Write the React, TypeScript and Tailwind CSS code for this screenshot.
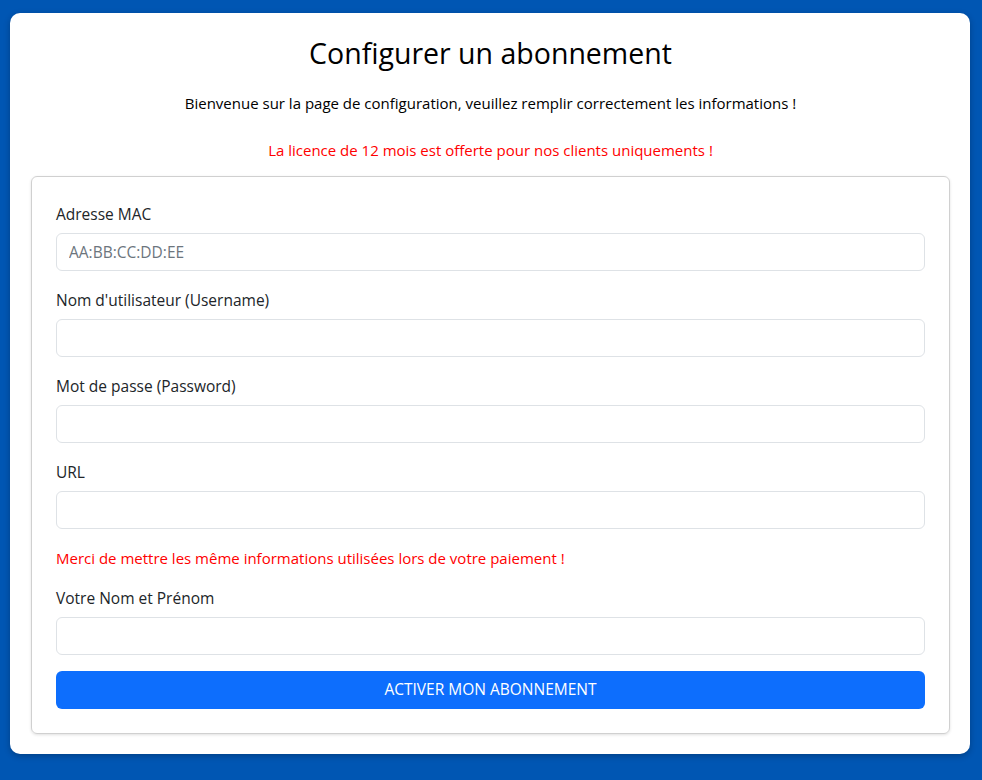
export default function App() {
  const fields = [
    { label: "Adresse MAC", placeholder: "AA:BB:CC:DD:EE" },
    { label: "Nom d'utilisateur (Username)", placeholder: "" },
    { label: "Mot de passe (Password)", placeholder: "", type: "password" },
    { label: "URL", placeholder: "" },
  ];

  return (
    <div
      className="min-h-[780px] bg-[#0056b3] pt-[13px] pb-[27px] pl-[10px] pr-[12px] text-[#212529]"
      style={{ fontFamily: '"Open Sans", "Noto Sans", Arial, sans-serif' }}
    >
      <div className="rounded-[10px] bg-white pt-5 pb-5 pl-[21px] pr-5 shadow-[0_2px_6px_rgba(0,0,0,0.25)]">
        <h1 className="text-center text-[28.5px] leading-[40px] font-normal text-black">
          Configurer un abonnement
        </h1>
        <p className="mt-[18px] text-center text-[15px] leading-6 text-black">
          Bienvenue sur la page de configuration, veuillez remplir correctement les informations !
        </p>
        <p className="mt-[23px] text-center text-[15px] leading-6 text-[#ff0000]">
          La licence de 12 mois est offerte pour nos clients uniquements !
        </p>

        <form
          className="mt-[14px] rounded-md border border-[#d0d0d0] px-6 pt-[24px] pb-6 shadow-[0_1px_3px_rgba(0,0,0,0.12)]"
          onSubmit={(e) => e.preventDefault()}
        >
          {fields.map((f) => (
            <div key={f.label} className="mb-4">
              <label className="mb-2 block pt-px text-[15.5px] leading-6">{f.label}</label>
              <input
                type={f.type ?? "text"}
                placeholder={f.placeholder}
                className="-mt-px block h-[38px] w-full rounded-md border border-[#dee2e6] px-3 text-[15.5px] placeholder:text-[#6c757d] focus:outline-none"
              />
            </div>
          ))}

          <p className="mb-4 pt-px text-[15px] leading-6 text-[#ff0000]">
            Merci de mettre les même informations utilisées lors de votre paiement !
          </p>

          <div className="-mt-px mb-4">
            <label className="mb-2 block pt-px text-[15.5px] leading-6">Votre Nom et Prénom</label>
            <input
              type="text"
              className="-mt-px block h-[38px] w-full rounded-md border border-[#dee2e6] px-3 text-[15.5px] focus:outline-none"
            />
          </div>

          <button
            type="submit"
            className="block h-[38px] w-full rounded-md bg-[#0d6efd] text-[15.5px] text-white uppercase"
          >
            Activer mon abonnement
          </button>
        </form>
      </div>
    </div>
  );
}
